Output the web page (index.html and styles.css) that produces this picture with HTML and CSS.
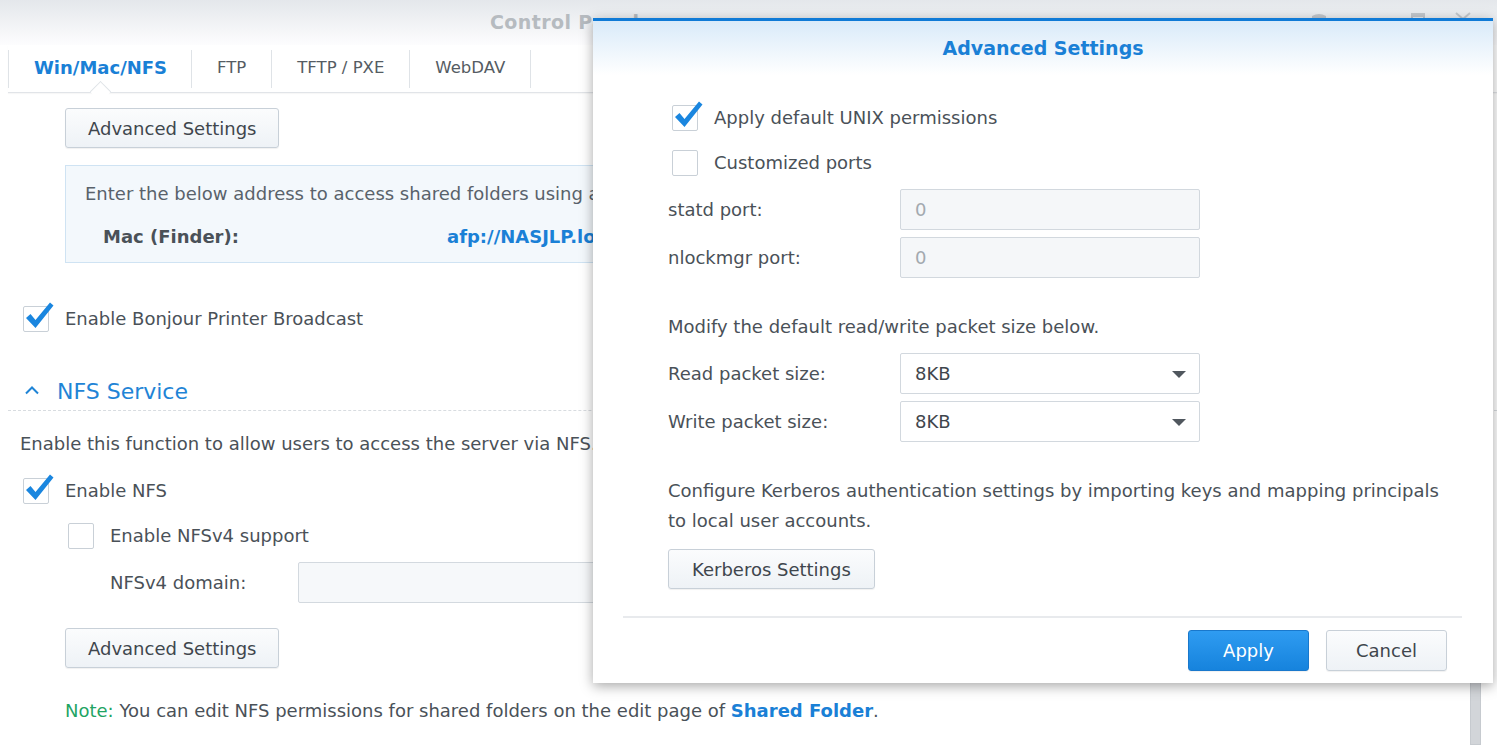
FILE: index.html
```html
<!DOCTYPE html>
<html lang="en">
<head>
    <meta charset="UTF-8">
    <meta name="viewport" content="width=device-width, initial-scale=1.0">
    <title>Control Panel - Advanced Settings</title>
    <link rel="stylesheet" href="styles.css">
</head>
<body>
    <div class="window">
        <div class="titlebar">
            <span class="title">Control Panel</span>
            <div class="win-btns">
                <svg class="wb wb-pin" width="18" height="18" viewBox="0 0 18 18"><path d="M2 6 Q9 2 16 6 L16 8 L2 8 Z" fill="#c3c8cd"/></svg>
                <svg class="wb wb-max" width="14" height="18" viewBox="0 0 14 18"><rect x="1" y="4" width="12" height="10" fill="none" stroke="#c3c8cd" stroke-width="2"/><rect x="1" y="4" width="12" height="3" fill="#c3c8cd"/></svg>
                <svg class="wb wb-close" width="18" height="18" viewBox="0 0 18 18"><path d="M2 3 L16 15 M16 3 L2 15" stroke="#c3c8cd" stroke-width="2"/></svg>
            </div>
        </div>

        <div class="tabs">
            <div class="tab active">Win/Mac/NFS</div>
            <div class="tab">FTP</div>
            <div class="tab">TFTP / PXE</div>
            <div class="tab">WebDAV</div>
        </div>

        <div class="content">
            <div class="indent top-btn">
                <button class="btn">Advanced Settings</button>
            </div>

            <div class="info">
                <div class="info-text">Enter the below address to access shared folders using a computer</div>
                <div class="info-row">
                    <span class="info-label">Mac (Finder):</span>
                    <span class="info-link">afp://NASJLP.local</span>
                </div>
            </div>

            <div class="check bonjour">
                <span class="box checked">
                    <svg class="tick" width="32" height="32" viewBox="0 0 32 32"><path d="M3 17 L7.5 13 L12.5 19 L27 1.5 L30.5 4.5 L12.5 27 Z" fill="#1a86df"/></svg>
                </span>
                Enable Bonjour Printer Broadcast
            </div>

            <div class="section-head">
                <svg class="chevron" width="16" height="10" viewBox="0 0 16 10"><path d="M2 8.5 L8 2.5 L14 8.5" fill="none" stroke="#1f84d6" stroke-width="2"/></svg>
                NFS Service
            </div>

            <p class="desc">Enable this function to allow users to access the server via NFS.</p>

            <div class="check enable-nfs">
                <span class="box checked">
                    <svg class="tick" width="32" height="32" viewBox="0 0 32 32"><path d="M3 17 L7.5 13 L12.5 19 L27 1.5 L30.5 4.5 L12.5 27 Z" fill="#1a86df"/></svg>
                </span>
                Enable NFS
            </div>

            <div class="check nfsv4">
                <span class="box"></span>
                Enable NFSv4 support
            </div>

            <div class="domain-row">
                <span class="domain-label">NFSv4 domain:</span>
                <div class="text-input"></div>
            </div>

            <div class="indent nfs-btn">
                <button class="btn">Advanced Settings</button>
            </div>

            <p class="note"><span class="note-tag">Note:</span> You can edit NFS permissions for shared folders on the edit page of <span class="link">Shared Folder</span>.</p>
        </div>

        <div class="scrollbar"></div>
    </div>

    <div class="dialog">
        <div class="dlg-head">Advanced Settings</div>
        <div class="dlg-body">
            <div class="check unix">
                <span class="box checked">
                    <svg class="tick" width="32" height="32" viewBox="0 0 32 32"><path d="M3 17 L7.5 13 L12.5 19 L27 1.5 L30.5 4.5 L12.5 27 Z" fill="#1a86df"/></svg>
                </span>
                Apply default UNIX permissions
            </div>
            <div class="check ports">
                <span class="box"></span>
                Customized ports
            </div>

            <div class="field first-field">
                <span class="flabel">statd port:</span>
                <div class="field-box disabled">0</div>
            </div>
            <div class="field">
                <span class="flabel">nlockmgr port:</span>
                <div class="field-box disabled">0</div>
            </div>

            <p class="para packet">Modify the default read/write packet size below.</p>

            <div class="field first-field">
                <span class="flabel">Read packet size:</span>
                <div class="field-box select">8KB<span class="caret"></span></div>
            </div>
            <div class="field">
                <span class="flabel">Write packet size:</span>
                <div class="field-box select">8KB<span class="caret"></span></div>
            </div>

            <p class="para kerberos">Configure Kerberos authentication settings by importing keys and mapping principals to local user accounts.</p>

            <button class="btn kerb-btn">Kerberos Settings</button>
        </div>
        <div class="dlg-foot">
            <button class="btn btn-primary">Apply</button>
            <button class="btn">Cancel</button>
        </div>
    </div>
</body>
</html>
```

FILE: styles.css
```css
* {
    box-sizing: border-box;
}
body {
    margin: 0;
    height: 745px;
    overflow: hidden;
    font-family: "DejaVu Sans", Verdana, sans-serif;
    font-size: 18px;
    color: #4a5158;
    background: #ffffff;
}
p {
    margin: 0;
}
.window {
    position: relative;
    height: 745px;
}

/* title bar */
.titlebar {
    height: 45px;
    display: flex;
    align-items: center;
    background: linear-gradient(#e4e7eb, #fdfdfe);
}
.title {
    padding-left: 490px;
    font-size: 19px;
    font-weight: bold;
    letter-spacing: 0.4px;
    color: #b6bbc0;
    line-height: 18px;
    margin-top: -2px;
}
.win-btns {
    margin-left: auto;
    display: flex;
    align-items: flex-start;
    height: 45px;
    padding-top: 10px;
    padding-right: 25px;
}
.wb-max {
    margin-left: 83px;
}
.wb-close {
    margin-left: 29px;
}

/* tabs */
.tabs {
    display: flex;
    align-items: center;
    height: 48px;
    margin-left: 8px;
    border-bottom: 1px solid #e1e4e8;
    box-shadow: 0 1px 1px rgba(0, 0, 0, 0.03);
}
.tab {
    position: relative;
    height: 38px;
    line-height: 36px;
    padding: 0 25px;
    border-left: 1px solid #dfe3e7;
    font-size: 16.5px;
    color: #555c63;
}
.tab:last-child {
    border-right: 1px solid #dfe3e7;
}
.tab.active {
    padding-right: 24px;
    font-size: 18px;
    font-weight: bold;
    color: #1a80d6;
}
.tab.active::after {
    content: "";
    position: absolute;
    left: 50%;
    bottom: -11px;
    width: 14px;
    height: 14px;
    margin-left: -7px;
    background: #ffffff;
    border-left: 1px solid #dfe3e7;
    border-top: 1px solid #dfe3e7;
    transform: rotate(45deg);
}

/* main content */
.content {
    padding-left: 20px;
}
.indent {
    padding-left: 45px;
}
.top-btn {
    margin-top: 15px;
}
.btn {
    height: 40px;
    padding: 0 22px;
    font-family: inherit;
    font-size: 18px;
    color: #3f464d;
    background: linear-gradient(#fbfcfd, #eef2f6);
    border: 1px solid #c8d0d8;
    border-radius: 3px;
    box-shadow: 0 1px 1px rgba(0, 0, 0, 0.06);
}
.info {
    margin: 17px 37px 0 45px;
    padding: 13px 19px 10px;
    background: #f3f8fc;
    border: 1px solid #cfe3f3;
}
.info-text {
    line-height: 30px;
    white-space: nowrap;
    color: #59626b;
}
.info-row {
    display: flex;
    margin-top: 13px;
    line-height: 30px;
    padding-left: 18px;
    font-weight: bold;
}
.info-label {
    width: 344px;
    color: #4a5158;
}
.info-link {
    color: #1a80d6;
}

.check {
    display: flex;
    align-items: center;
    height: 26px;
    line-height: 26px;
    white-space: nowrap;
}
.box {
    position: relative;
    flex: none;
    width: 26px;
    height: 26px;
    margin-right: 16px;
    background: #ffffff;
    border: 1px solid #c9d0d7;
    border-radius: 2px;
}
.tick {
    position: absolute;
    left: -1px;
    top: -6px;
}
.bonjour {
    margin-top: 43px;
    padding-left: 3px;
}
.section-head {
    display: flex;
    align-items: center;
    margin: 40px 0 0 -12px;
    padding-left: 16px;
    height: 39px;
    border-bottom: 1px dashed #d8dce0;
    font-size: 22px;
    color: #1f84d6;
}
.chevron {
    margin-right: 17px;
    margin-top: -2px;
}
.desc {
    margin-top: 20px;
    line-height: 26px;
    white-space: nowrap;
}
.enable-nfs {
    margin-top: 21px;
    padding-left: 3px;
}
.nfsv4 {
    margin-top: 19px;
    padding-left: 48px;
}
.domain-row {
    display: flex;
    align-items: center;
    margin-top: 13px;
    padding-left: 90px;
}
.domain-label {
    width: 188px;
}
.text-input {
    width: 600px;
    height: 41px;
    background: #f6f8fa;
    border: 1px solid #d3d9df;
    border-radius: 2px;
}
.nfs-btn {
    margin-top: 25px;
}
.note {
    margin-top: 30px;
    padding-left: 45px;
    line-height: 26px;
}
.note-tag {
    color: #1fa464;
}
.link {
    font-weight: bold;
    color: #1a80d6;
}
.scrollbar {
    position: absolute;
    right: 16px;
    top: 120px;
    bottom: 0;
    width: 11px;
    background: #d2d5d9;
    border: 1px solid #c6cacf;
}

/* dialog */
.dialog {
    position: absolute;
    left: 593px;
    top: 18px;
    width: 900px;
    height: 665px;
    background: #ffffff;
    border-top: 3px solid #0f7ad6;
    box-shadow: 0 3px 12px rgba(0, 0, 0, 0.35);
}
.dlg-head {
    height: 54px;
    line-height: 54px;
    text-align: center;
    font-size: 19px;
    font-weight: bold;
    color: #1a80d6;
    background: linear-gradient(#d9eaf9, #ffffff);
}
.dlg-body {
    padding: 0 45px 0 75px;
}
.unix {
    margin-top: 30px;
    padding-left: 4px;
}
.ports {
    margin-top: 19px;
    padding-left: 4px;
}
.field {
    display: flex;
    align-items: center;
    margin-top: 7px;
}
.field.first-field {
    margin-top: 13px;
}
.flabel {
    width: 232px;
}
.field-box {
    position: relative;
    width: 300px;
    height: 41px;
    line-height: 39px;
    padding-left: 14px;
    border: 1px solid #d2d8de;
    border-radius: 2px;
}
.field-box.disabled {
    background: #f5f7f9;
    color: #a3a9af;
}
.field-box.select {
    background: #ffffff;
    color: #3f464d;
}
.caret {
    position: absolute;
    right: 13px;
    top: 17px;
    border-left: 7px solid transparent;
    border-right: 7px solid transparent;
    border-top: 7px solid #50575e;
}
.para {
    line-height: 26px;
}
.packet {
    margin-top: 36px;
}
.kerberos {
    margin-top: 34px;
    line-height: 30px;
}
.kerb-btn {
    margin-top: 13px;
    padding: 0 23px;
}
.dlg-foot {
    display: flex;
    justify-content: flex-end;
    gap: 17px;
    margin: 27px 31px 0 30px;
    padding: 12px 15px 0 0;
    border-top: 2px solid #e8eaed;
}
.dlg-foot .btn {
    min-width: 121px;
    height: 41px;
}
.btn-primary {
    color: #ffffff;
    background: linear-gradient(#2f9cf1, #1683dd);
    border-color: #1978cc;
}
```
